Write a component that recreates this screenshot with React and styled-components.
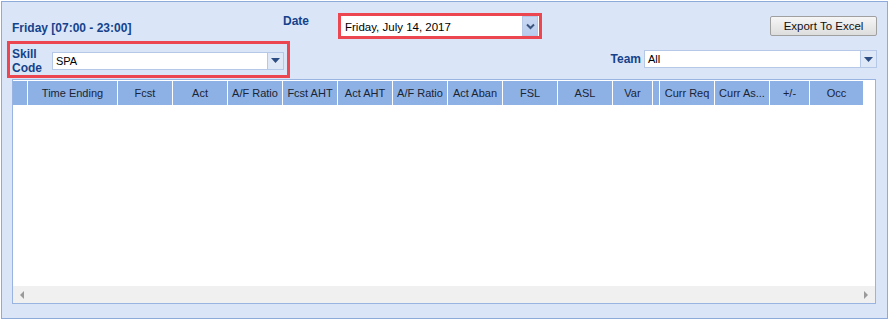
import React from 'react';
import styled, { createGlobalStyle } from 'styled-components';

const GlobalStyle = createGlobalStyle`
  body {
    margin: 0;
    background: #ffffff;
    font-family: 'Liberation Sans', Arial, sans-serif;
    font-size: 11px;
  }
`;

const Panel = styled.div`
  margin: 1px;
  width: 885px;
  height: 305px;
  border: 1px solid #8eaadb;
  background: #dae6f8;
  display: flex;
  flex-direction: column;
  padding-top: 11px;
  box-sizing: content-box;
`;

const TopRow = styled.div`
  display: flex;
  align-items: flex-start;
  height: 28px;
  padding-right: 10px;
`;

const DayLabel = styled.div`
  width: 281px;
  padding-left: 10px;
  margin-top: 8px;
  font-size: 12px;
  font-weight: bold;
  color: #15428b;
  box-sizing: border-box;
`;

const FieldLabel = styled.div`
  font-size: 12px;
  font-weight: bold;
  color: #15428b;
  width: ${({ width }) => width}px;
  margin-top: ${({ top }) => top || 0}px;
  text-align: ${({ align }) => align || 'left'};
  line-height: 14px;
`;

const Highlight = styled.div`
  border: 3px solid #ec4750;
  display: flex;
  align-items: center;
  box-sizing: border-box;
`;

const DateBox = styled(Highlight)`
  width: 204px;
  height: 26px;
  background: #ffffff;
  padding: 0 1px 0 4px;
`;

const DateText = styled.span`
  flex: 1;
  color: #000;
  font-size: 11.5px;
  padding-top: 1px;
`;

const ChevronButton = styled.div`
  width: 14px;
  height: 18px;
  border: 1px solid #b6c8e6;
  background: linear-gradient(#cad9f3, #b9ccee);
  display: flex;
  align-items: center;
  justify-content: center;
`;

const Spacer = styled.div`
  flex: 1;
`;

const ExportButton = styled.button`
  margin-top: 3px;
  width: 107px;
  height: 20px;
  border: 1px solid #a0a0a0;
  border-radius: 2px;
  background: linear-gradient(#f6f6f6, #dddddd);
  font-family: 'Liberation Sans', Arial, sans-serif;
  font-size: 11.5px;
  color: #111;
  padding: 0;
`;

const SecondRow = styled.div`
  display: flex;
  align-items: flex-start;
  padding-left: 5px;
  padding-right: 10px;
`;

const SkillBox = styled(Highlight)`
  width: 283px;
  height: 37px;
  padding: 2px 3px 0 2px;
  gap: 7px;
`;

const ComboInput = styled.div`
  display: flex;
  height: 18px;
  width: ${({ width }) => width}px;
  border: 1px solid #b5c8e8;
  background: #ffffff;
  box-sizing: border-box;
`;

const ComboText = styled.div`
  flex: 1;
  padding-left: 3px;
  line-height: 16px;
  color: #000;
`;

const ComboArrow = styled.div`
  width: 15px;
  background: #dfe8f6;
  border-left: 1px solid #b5c8e8;
  display: flex;
  align-items: center;
  justify-content: center;
`;

const TeamGroup = styled.div`
  margin-left: auto;
  margin-top: 9px;
  display: flex;
  align-items: center;
  gap: 3px;
`;

const Grid = styled.div`
  margin: 1px 11px 0 10px;
  height: 225px;
  border: 1px solid #99b4e0;
  background: #ffffff;
  display: flex;
  flex-direction: column;
  box-sizing: border-box;
`;

const HeaderRow = styled.div`
  display: flex;
  height: 25px;
`;

const HeaderCell = styled.div`
  width: ${({ width }) => width}px;
  flex: none;
  background: #8db1e5;
  border-right: 1px solid #ffffff;
  border-top: 1px solid #ffffff;
  box-sizing: border-box;
  display: flex;
  align-items: center;
  justify-content: center;
  color: #1b2433;
  font-size: 11px;
  white-space: nowrap;
  overflow: hidden;
`;

const Body = styled.div`
  flex: 1;
`;

const Scrollbar = styled.div`
  height: 17px;
  background: #f0f0f0;
  display: flex;
  align-items: center;
  justify-content: space-between;
  padding: 0 6px;
`;

const columns = [
  { label: '', width: 15 },
  { label: 'Time Ending', width: 90 },
  { label: 'Fcst', width: 55 },
  { label: 'Act', width: 55 },
  { label: 'A/F Ratio', width: 55 },
  { label: 'Fcst AHT', width: 55 },
  { label: 'Act AHT', width: 55 },
  { label: 'A/F Ratio', width: 55 },
  { label: 'Act Aban', width: 55 },
  { label: 'FSL', width: 55 },
  { label: 'ASL', width: 55 },
  { label: 'Var', width: 40 },
  { label: '', width: 7 },
  { label: 'Curr Req', width: 55 },
  { label: 'Curr As...', width: 55 },
  { label: '+/-', width: 40 },
  { label: 'Occ', width: 54 },
];

const DownTriangle = () => (
  <svg width="9" height="5" viewBox="0 0 9 5">
    <path d="M0 0h9L4.5 5z" fill="#2c4c84" />
  </svg>
);

const Chevron = () => (
  <svg width="9" height="7" viewBox="0 0 9 7">
    <path d="M1 1.5l3.5 3.5 3.5-3.5" fill="none" stroke="#3b557f" strokeWidth="2" />
  </svg>
);

const Combo = ({ value, width }) => (
  <ComboInput width={width}>
    <ComboText>{value}</ComboText>
    <ComboArrow>
      <DownTriangle />
    </ComboArrow>
  </ComboInput>
);

const ScrollArrow = ({ dir }) => (
  <svg width="5" height="8" viewBox="0 0 5 8">
    <path d={dir === 'left' ? 'M5 0v8L1 4z' : 'M0 0v8l4-4z'} fill="#9a9a9a" />
  </svg>
);

const App = () => (
  <>
    <GlobalStyle />
    <Panel>
      <TopRow>
        <DayLabel>Friday [07:00 - 23:00]</DayLabel>
        <FieldLabel width={55} top={1}>Date</FieldLabel>
        <DateBox>
          <DateText>Friday, July 14, 2017</DateText>
          <ChevronButton>
            <Chevron />
          </ChevronButton>
        </DateBox>
        <Spacer />
        <ExportButton>Export To Excel</ExportButton>
      </TopRow>
      <SecondRow>
        <SkillBox>
          <FieldLabel width={33}>
            Skill
            <br />
            Code
          </FieldLabel>
          <Combo value="SPA" width={232} />
        </SkillBox>
        <TeamGroup>
          <FieldLabel width={33} align="right">Team</FieldLabel>
          <Combo value="All" width={233} />
        </TeamGroup>
      </SecondRow>
      <Grid>
        <HeaderRow>
          {columns.map((col, i) => (
            <HeaderCell key={i} width={col.width}>
              {col.label}
            </HeaderCell>
          ))}
        </HeaderRow>
        <Body />
        <Scrollbar>
          <ScrollArrow dir="left" />
          <ScrollArrow dir="right" />
        </Scrollbar>
      </Grid>
    </Panel>
  </>
);

export default App;
